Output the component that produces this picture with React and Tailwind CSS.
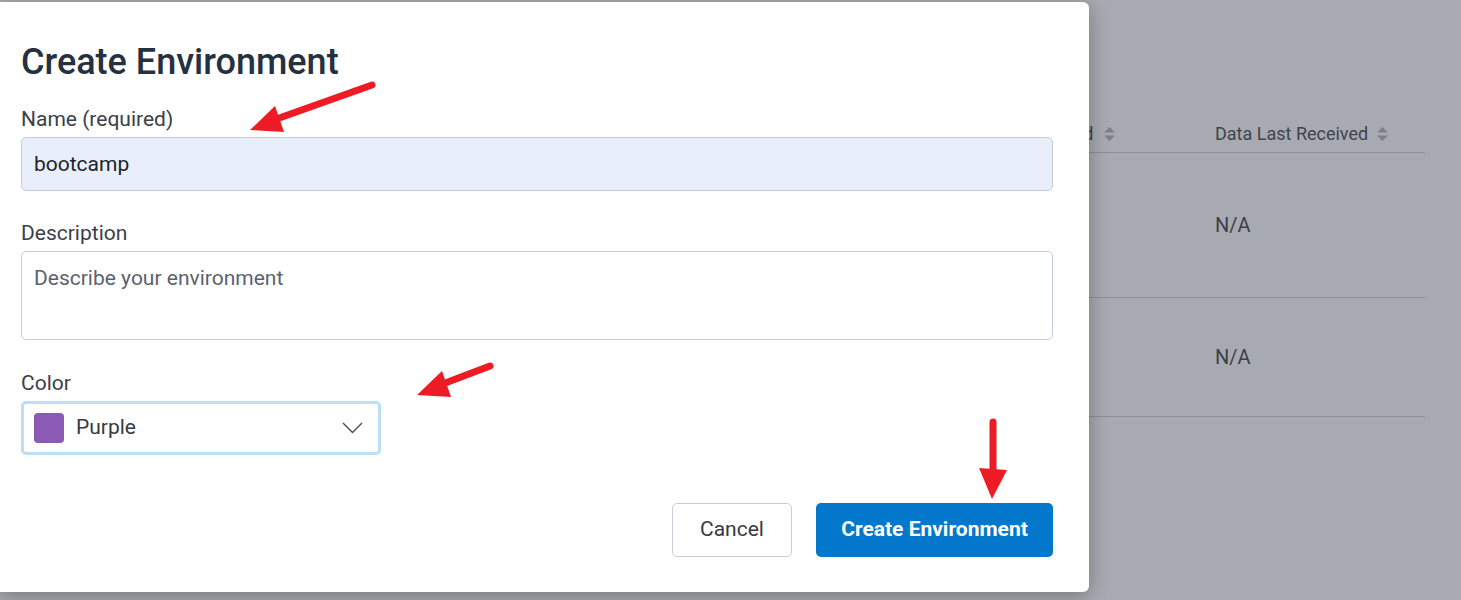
function SortIcon() {
  return (
    <svg width="13" height="16" viewBox="0 0 13 16" className="shrink-0">
      <path d="M6.5 1 L12 6.5 H1 Z" fill="#7b808b" />
      <path d="M6.5 15 L12 9.5 H1 Z" fill="#7b808b" />
    </svg>
  )
}

function Arrows() {
  const red = '#ed1c24'
  return (
    <svg className="pointer-events-none absolute inset-0" width="1461" height="600">
      <line x1="372" y1="85" x2="268" y2="122" stroke={red} strokeWidth="7" strokeLinecap="round" />
      <polygon points="250,130 275,106 284,132" fill={red} />
      <line x1="490" y1="366" x2="432" y2="388" stroke={red} strokeWidth="7" strokeLinecap="round" />
      <polygon points="417,395 442,371 451,397" fill={red} />
      <line x1="993" y1="422" x2="993" y2="478" stroke={red} strokeWidth="7" strokeLinecap="round" />
      <polygon points="992,499 979,468 1007,470" fill={red} />
    </svg>
  )
}

export default function App() {
  return (
    <div className="relative h-[600px] w-full overflow-hidden bg-[#a8aab1] font-['Roboto','Liberation_Sans',sans-serif]">
      {/* page behind the overlay */}
      <div className="flex justify-end pr-[36px] pt-[122px]">
        <div className="w-[640px] text-[#3c4048]">
          <div className="grid grid-cols-[1fr_228px_210px] border-b border-[#8b909c] pb-[6px] text-[18px] leading-[24px] text-[#40454d]">
            <div>Environment</div>
            <div className="flex items-center gap-[10px]">
              Last Updated <SortIcon />
            </div>
            <div className="flex items-center gap-[8px]">
              Data Last Received <SortIcon />
            </div>
          </div>
          <div className="grid h-[145px] grid-cols-[1fr_228px_210px] items-center border-b border-[#8b909c] text-[20px]">
            <div>production</div>
            <div>N/A</div>
            <div>N/A</div>
          </div>
          <div className="grid h-[119px] grid-cols-[1fr_228px_210px] items-center border-b border-[#8b909c] text-[20px]">
            <div>staging</div>
            <div>N/A</div>
            <div>N/A</div>
          </div>
        </div>
      </div>

      {/* modal */}
      <div className="absolute left-0 top-[2px] h-[590px] w-[1089px] rounded-r-md bg-white pl-[21px] pt-[40px] shadow-[0_4px_20px_rgba(0,0,0,0.3)]">
        <h1 className="text-[36px] font-medium leading-[40px] text-[#253141]">Create Environment</h1>

        <label className="mt-[25px] mb-[6px] block text-[21px] leading-[24px] text-[#3b4048]">Name (required)</label>
        <input
          type="text"
          defaultValue="bootcamp"
          className="block h-[54px] w-[1032px] rounded-[5px] border border-[#c5cdda] bg-[#e8effb] pl-[12px] text-[21px] text-[#1f2329] outline-none"
        />

        <label className="mt-[30px] mb-[6px] block text-[21px] leading-[24px] text-[#3b4048]">Description</label>
        <textarea
          placeholder="Describe your environment"
          className="block h-[89px] w-[1032px] resize-none rounded-[5px] border border-[#c5cdda] px-[12px] pt-[12px] text-[21px] leading-[28px] outline-none placeholder:text-[#5b6270]"
        />

        <label className="mt-[31px] mb-[6px] block text-[21px] leading-[24px] text-[#3b4048]">Color</label>
        <div className="flex h-[54px] w-[360px] items-center rounded-[5px] border-[3px] border-[#bcdef6] pl-[10px] pr-[15px]">
          <span className="h-[30px] w-[30px] rounded-[4px] bg-[#8a5ab5]" />
          <span className="ml-[12px] flex-1 text-[21px] text-[#353a40]">Purple</span>
          <svg width="21" height="12" viewBox="0 0 21 12" className="text-[#4a4f57]">
            <polyline points="1,1 10.5,10.5 20,1" fill="none" stroke="currentColor" strokeWidth="1.4" />
          </svg>
        </div>

        <div className="mt-[48px] flex w-[1032px] justify-end gap-[24px]">
          <button className="h-[54px] w-[120px] rounded-[5px] border border-[#c5cdda] bg-white text-[21px] text-[#353a40]">
            Cancel
          </button>
          <button className="h-[54px] w-[237px] rounded-[5px] bg-[#0277cc] text-[21px] font-bold text-white">
            Create Environment
          </button>
        </div>
      </div>

      <Arrows />
    </div>
  )
}
